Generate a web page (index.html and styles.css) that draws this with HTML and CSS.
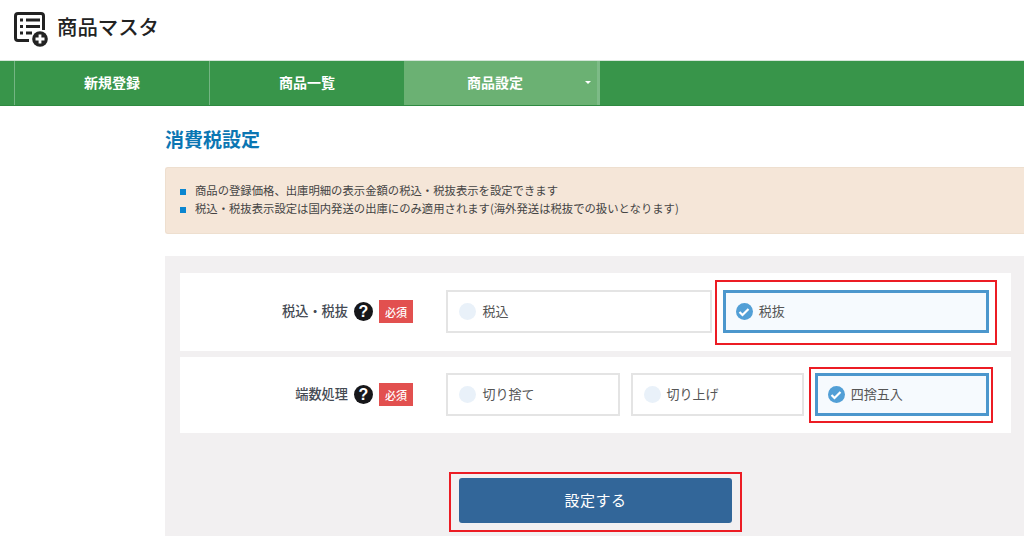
FILE: index.html
```html
<!DOCTYPE html>
<html lang="ja">

<head>
    <meta charset="utf-8">
    <meta name="viewport" content="width=device-width, initial-scale=1.0">
    <title>商品マスタ</title>
    <link rel="stylesheet" href="styles.css">
</head>

<body>
    <header class="site_header">
        <svg class="logo_icon" width="34" height="35" viewBox="0 0 34 35" aria-hidden="true">
            <path d="M15 28.500H4Q1.500 28.500 1.500 26V4Q1.500 1.500 4 1.500H27Q29.500 1.500 29.500 4V18" fill="none" stroke="#222" stroke-width="3"/>
            <rect x="6" y="6.500" width="3" height="3" fill="#222"/>
            <rect x="12" y="6.500" width="14" height="3" fill="#222"/>
            <rect x="6" y="13" width="3" height="3" fill="#222"/>
            <rect x="12" y="13" width="14" height="3" fill="#222"/>
            <rect x="6" y="19.500" width="3" height="3" fill="#222"/>
            <rect x="12" y="19.500" width="6" height="3" fill="#222"/>
            <circle cx="26" cy="27" r="7.800" fill="#222"/>
            <path d="M26 22.500V31.500M21.500 27H30.500" stroke="#fff" stroke-width="2.800"/>
        </svg>
        <h1>商品マスタ</h1>
    </header>

    <nav class="main_nav">
        <a class="nav_item" href="#">新規登録</a>
        <a class="nav_item" href="#">商品一覧</a>
        <a class="nav_item active" href="#">商品設定<span class="caret"></span></a>
    </nav>

    <main class="content">
        <h2>消費税設定</h2>

        <ul class="notice">
            <li>商品の登録価格、出庫明細の表示金額の税込・税抜表示を設定できます</li>
            <li>税込・税抜表示設定は国内発送の出庫にのみ適用されます(海外発送は税抜での扱いとなります)</li>
        </ul>

        <form class="panel">
            <div class="row row_tax">
                <div class="row_label">
                    <span class="label_text">税込・税抜</span>
                    <span class="help">?</span>
                    <span class="required">必須</span>
                </div>
                <div class="options">
                    <div class="option"><span class="radio"></span>税込</div>
                    <div class="option checked marked_wide">
                        <span class="radio"><svg width="12" height="10" viewBox="0 0 12 10"><path d="M1.500 5L4.500 8L10.500 2" fill="none" stroke="#fff" stroke-width="2.200"/></svg></span>税抜
                    </div>
                </div>
            </div>

            <div class="row row_round">
                <div class="row_label">
                    <span class="label_text">端数処理</span>
                    <span class="help">?</span>
                    <span class="required">必須</span>
                </div>
                <div class="options">
                    <div class="option"><span class="radio"></span>切り捨て</div>
                    <div class="option"><span class="radio"></span>切り上げ</div>
                    <div class="option checked marked_small">
                        <span class="radio"><svg width="12" height="10" viewBox="0 0 12 10"><path d="M1.500 5L4.500 8L10.500 2" fill="none" stroke="#fff" stroke-width="2.200"/></svg></span>四捨五入
                    </div>
                </div>
            </div>

            <div class="submit_wrap">
                <button class="submit_button" type="button">設定する</button>
            </div>
        </form>
    </main>
</body>

</html>
```

FILE: styles.css
```css
* {
    box-sizing: border-box;
}

html,
body {
    height: 100%;
}

body {
    margin: 0;
    overflow: hidden;
    background: white;
    color: #222;
    font-family: "Noto Sans CJK JP", "Noto Sans", sans-serif;
}

.site_header {
    display: flex;
    align-items: center;
    gap: 9px;
    height: 60px;
    padding: 0 0 1px 14px;
}

.logo_icon {
    flex: none;
}

.site_header h1 {
    margin: 0 0 7px;
    font-size: 20.4px;
    font-weight: 500;
    color: #222;
}

.main_nav {
    display: flex;
    height: 46px;
    padding-left: 14px;
    background: #38954a;
    border-top: 1px solid #d5e6d9;
    border-bottom: 1px solid #2f8a41;
}

.nav_item {
    position: relative;
    display: flex;
    align-items: center;
    justify-content: center;
    width: 195px;
    padding-bottom: 2px;
    border-left: 1px solid #74b583;
    color: white;
    font-size: 14px;
    font-weight: 700;
    text-decoration: none;
}

.nav_item.active {
    width: 196px;
    padding-right: 12px;
    background: #6bb173;
    border-left-color: #6bb173;
    border-right: 3px solid #7dbb87;
}

.caret {
    position: absolute;
    top: 20px;
    right: 6px;
    border-top: 3px solid white;
    border-left: 3px solid transparent;
    border-right: 3px solid transparent;
}

.content {
    padding: 20px 0 0 165px;
}

.content h2 {
    margin: 0 0 15px;
    color: #0b76b3;
    font-size: 19px;
    font-weight: 700;
    line-height: 26px;
}

.notice {
    margin: 0 0 22px;
    padding: 13px 0 15px 14px;
    list-style: none;
    background: #f5e6d8;
    border: 1px solid #eedfcf;
    border-right: 0;
    border-radius: 3px 0 0 3px;
    height: 67px;
    font-size: 11.35px;
    line-height: 18px;
    color: #444;
}

.notice li {
    display: flex;
    align-items: center;
    gap: 9px;
    white-space: nowrap;
}

.notice li::before {
    content: "";
    flex: none;
    width: 6px;
    height: 6px;
    margin-top: 3px;
    background: #0b86d0;
}

.panel {
    height: 280px;
    padding: 17px 13px 0 15px;
    background: #f2f0f1;
}

.row {
    display: flex;
    align-items: center;
    margin-bottom: 6px;
    padding-left: 0;
    background: white;
}

.row_tax {
    height: 78px;
    padding-bottom: 1px;
}

.row_round {
    height: 76px;
    padding-bottom: 1px;
}

.row_label {
    display: flex;
    align-items: center;
    justify-content: flex-end;
    flex: none;
    width: 233px;
    font-size: 13.2px;
    font-weight: 500;
    color: #444a53;
}

.label_text {
    padding-bottom: 2px;
}

.help {
    display: flex;
    align-items: center;
    justify-content: center;
    width: 19px;
    height: 19px;
    margin: 0 6px;
    border-radius: 50%;
    background: #17171a;
    color: white;
    font-family: "Liberation Sans", sans-serif;
    font-size: 16px;
    font-weight: 700;
}

.required {
    display: flex;
    align-items: center;
    justify-content: center;
    width: 34px;
    height: 23px;
    background: #e2504f;
    color: white;
    font-size: 11px;
    font-weight: 500;
}

.options {
    display: flex;
    gap: 11px;
    flex: none;
    width: 542.6px;
    margin-left: 33.4px;
}

.option {
    position: relative;
    display: flex;
    align-items: center;
    flex: 1;
    gap: 6px;
    height: 43px;
    padding: 0 0 2px 11px;
    background: white;
    border: 2px solid #e4e4e4;
    color: #555;
    font-size: 13px;
}

.radio {
    display: flex;
    align-items: center;
    justify-content: center;
    flex: none;
    width: 17px;
    height: 17px;
    margin-top: 2px;
    border-radius: 50%;
    background: #e9f1f9;
}

.option.checked {
    background: #f6fafe;
    border: 3px solid #4c97cd;
    padding-left: 10px;
}

.option.checked .radio {
    background: #529fd6;
}

/* red annotation frames drawn over the screenshot */
.marked_wide::after,
.marked_small::after,
.submit_wrap::after {
    content: "";
    position: absolute;
    border: 2px solid #ec1c24;
    pointer-events: none;
}

.marked_wide::after {
    inset: -13px -11px -15px -11px;
}

.marked_small::after {
    inset: -9px -7px -10px -9px;
}

.submit_wrap {
    position: relative;
    width: 273px;
    margin: 45px auto 0;
}

.submit_wrap::after {
    inset: -6px -10px -9px -10px;
}

.submit_button {
    display: block;
    width: 100%;
    height: 45px;
    padding: 0 0 3px;
    background: #326699;
    border: 0;
    border-radius: 3px;
    color: white;
    font-family: inherit;
    font-size: 15px;
    letter-spacing: 0.5px;
}
```
